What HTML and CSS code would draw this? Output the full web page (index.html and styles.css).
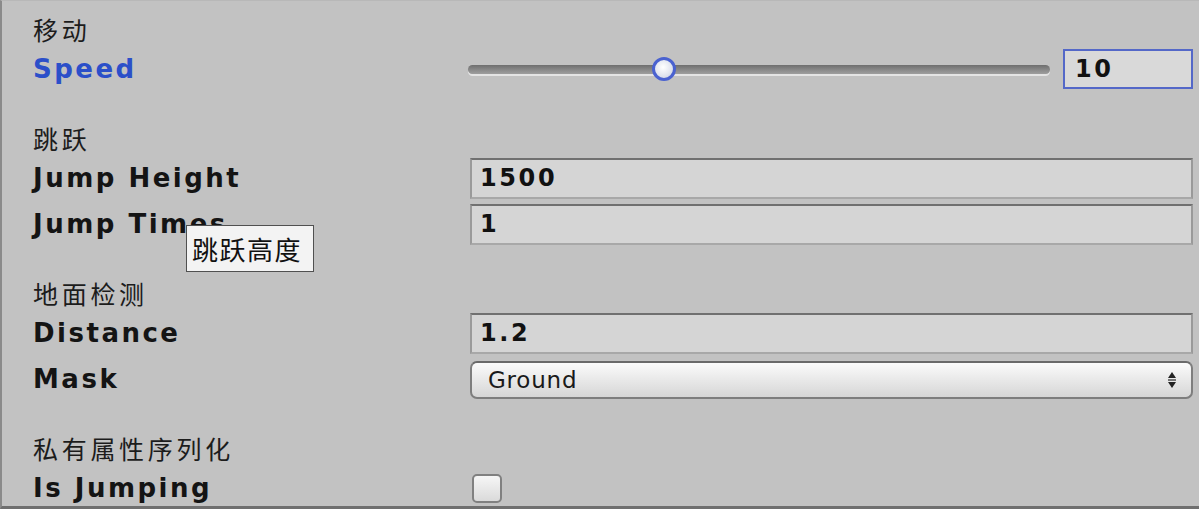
FILE: index.html
```html
<!DOCTYPE html>
<html>
<head>
<meta charset="utf-8">
<link rel="stylesheet" href="styles.css">
</head>
<body>
<div class="panel">
  <section class="group">
    <div class="header">移动</div>
    <div class="row">
      <div class="label label-active">Speed</div>
      <div class="control slider">
        <div class="track">
          <div class="thumb" style="left: 33.6%"></div>
        </div>
        <div class="field field-focus">10</div>
      </div>
    </div>
  </section>
  <section class="group">
    <div class="header">跳跃</div>
    <div class="row">
      <div class="label">Jump Height</div>
      <div class="control"><div class="field">1500</div></div>
    </div>
    <div class="row">
      <div class="label">Jump Times</div>
      <div class="control"><div class="field">1</div></div>
    </div>
  </section>
  <section class="group">
    <div class="header">地面检测</div>
    <div class="row">
      <div class="label">Distance</div>
      <div class="control"><div class="field">1.2</div></div>
    </div>
    <div class="row">
      <div class="label">Mask</div>
      <div class="control">
        <div class="dropdown">
          <span>Ground</span>
          <svg class="arrows" width="10" height="18" viewBox="0 0 10 18">
            <path d="M5 1 L9 7 L1 7 Z" fill="#222"/>
            <rect x="1" y="8.3" width="8" height="1.4" fill="#444"/>
            <path d="M1 11 L9 11 L5 17 Z" fill="#222"/>
          </svg>
        </div>
      </div>
    </div>
  </section>
  <section class="group">
    <div class="header">私有属性序列化</div>
    <div class="row">
      <div class="label">Is Jumping</div>
      <div class="control"><div class="checkbox"></div></div>
    </div>
  </section>
  <div class="tooltip">跳跃高度</div>
</div>
</body>
</html>
```

FILE: styles.css
```css
html, body {
  margin: 0;
  padding: 0;
  background: #c2c2c2;
}

.panel {
  position: relative;
  box-sizing: border-box;
  width: 1199px;
  height: 509px;
  overflow: hidden;
  background: #c2c2c2;
  border-left: 2px solid #8a8a8a;
  border-bottom: 3px solid #6f6f6f;
  border-top: 1px solid #b8b8b8;
  padding: 7px 6px 0 31px;
  display: flex;
  flex-direction: column;
  gap: 28px;
}

.group {
  display: flex;
  flex-direction: column;
  gap: 6px;
}

.header {
  height: 41px;
  margin-bottom: -6px;
  display: flex;
  align-items: center;
  font-family: "Noto Sans CJK SC", "DejaVu Sans", sans-serif;
  font-size: 25px;
  letter-spacing: 3.7px;
  color: #1c1c1c;
}

.row {
  height: 40px;
  display: flex;
  align-items: center;
}

.label {
  width: 437px;
  flex: none;
  font-family: "DejaVu Sans", "Noto Sans CJK SC", sans-serif;
  font-weight: bold;
  font-size: 26px;
  letter-spacing: 2.5px;
  color: #141414;
  white-space: nowrap;
}

.label-active {
  color: #2b4fc9;
}

.control {
  flex: 1;
  height: 100%;
  display: flex;
  align-items: center;
}

.field {
  box-sizing: border-box;
  flex: 1;
  height: 41px;
  display: flex;
  align-items: center;
  padding-left: 8px;
  background: #d5d5d5;
  border: 2px solid #9a9a9a;
  border-top-color: #707070;
  border-bottom-color: #a8a8a8;
  font-family: "DejaVu Sans", sans-serif;
  font-weight: bold;
  font-size: 24px;
  letter-spacing: 2.6px;
  color: #111;
}

.slider {
  gap: 13px;
}

.track {
  position: relative;
  flex: 1;
  height: 9px;
  margin-left: -2px;
  border-radius: 5px;
  background: linear-gradient(#6e6e6e, #8c8c8c 60%, #9e9e9e);
  box-shadow: 0 2px 0 #e4e4e4;
}

.thumb {
  position: absolute;
  top: 50%;
  width: 18px;
  height: 18px;
  margin-left: -12px;
  margin-top: -12px;
  border-radius: 50%;
  border: 3px solid #4a62d0;
  background: radial-gradient(circle at 45% 40%, #ffffff, #dfe3ee 60%, #c4c9d8);
}

.field-focus {
  flex: none;
  width: 130px;
  height: 40px;
  padding-left: 10px;
  background: #d9d9d9;
  border: 2px solid #5468c8;
}

.dropdown {
  box-sizing: border-box;
  flex: 1;
  height: 38px;
  margin-top: 2px;
  display: flex;
  align-items: center;
  justify-content: space-between;
  padding: 0 14px 0 16px;
  border: 2px solid #7e7e7e;
  border-top-color: #6a6a6a;
  border-radius: 7px;
  background: linear-gradient(#fbfbfb, #ececec 40%, #d6d6d6);
  font-family: "DejaVu Sans", sans-serif;
  font-size: 23px;
  letter-spacing: 0.8px;
  color: #1a1a1a;
}

.arrows {
  display: block;
}

.checkbox {
  box-sizing: border-box;
  width: 30px;
  height: 29px;
  margin-left: 2px;
  border: 2px solid #808080;
  border-radius: 5px;
  background: linear-gradient(#f6f6f6, #dadada);
}

.tooltip {
  position: absolute;
  left: 184px;
  top: 224px;
  box-sizing: border-box;
  width: 128px;
  height: 47px;
  display: flex;
  align-items: center;
  padding-left: 5px;
  background: #f3f3f3;
  border: 1px solid #505050;
  font-family: "Noto Sans CJK SC", "DejaVu Sans", sans-serif;
  font-size: 26px;
  letter-spacing: 1.5px;
  color: #111;
}
```
